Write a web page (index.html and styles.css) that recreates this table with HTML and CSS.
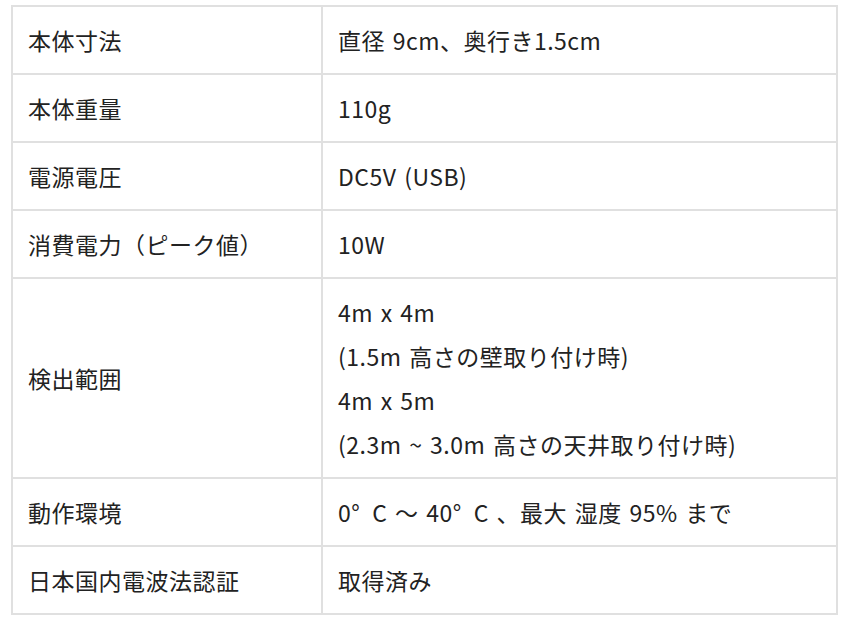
FILE: index.html
```html
<!DOCTYPE html>
<html lang="ja">
<head>
<meta charset="utf-8">
<link rel="stylesheet" href="styles.css">
</head>
<body>
<table class="spec">
  <tbody>
    <tr><th>本体寸法</th><td>直径 9cm、奥行き1.5cm</td></tr>
    <tr><th>本体重量</th><td>110g</td></tr>
    <tr><th>電源電圧</th><td>DC5V (USB)</td></tr>
    <tr><th>消費電力（ピーク値）</th><td>10W</td></tr>
    <tr><th>検出範囲</th><td>4m x 4m<br>(1.5m 高さの壁取り付け時)<br>4m x 5m<br>(2.3m ~ 3.0m 高さの天井取り付け時)</td></tr>
    <tr><th>動作環境</th><td>0°&#8194;C ～ 40°&#8194;C 、最大 湿度 95% まで</td></tr>
    <tr><th>日本国内電波法認証</th><td>取得済み</td></tr>
  </tbody>
</table>
</body>
</html>
```
FILE: styles.css
```css
html, body {
  margin: 0;
  padding: 0;
  background: #fff;
}
body {
  font-family: "Noto Sans CJK JP", "Noto Sans", sans-serif;
  color: #222;
}
.spec {
  margin: 5px 0 0 11px;
  width: 827px;
  border-collapse: collapse;
  font-size: 23px;
  line-height: 44px;
  letter-spacing: 0.5px;
  word-spacing: 2px;
}
.spec th,
.spec td {
  border: 2px solid #e0e0e0;
  padding: 11px 15px;
  text-align: left;
  vertical-align: middle;
  font-weight: normal;
}
.spec th {
  width: 278px;
}
```
